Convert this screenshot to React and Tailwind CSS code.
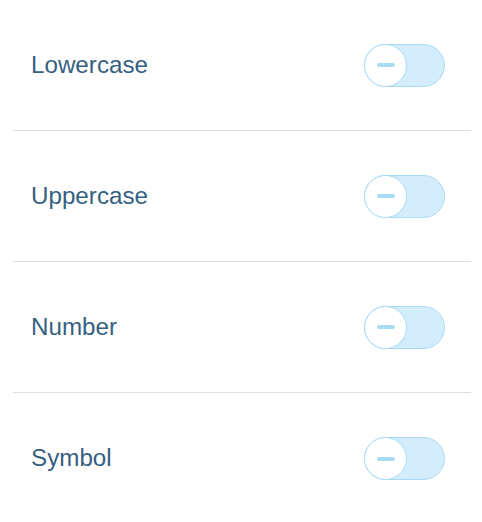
const OPTIONS = ["Lowercase", "Uppercase", "Number", "Symbol"];

function Toggle() {
  return (
    <div className="flex h-[43px] w-[81px] items-center rounded-full border border-[#a9dbf5] bg-[#d4edfc]">
      <div className="-ml-px flex h-[43px] w-[43px] items-center justify-center rounded-full border border-[#a9dbf5] bg-white">
        <div className="h-[4px] w-[18px] rounded-full bg-[#a9dbf5]" />
      </div>
    </div>
  );
}

export default function App() {
  return (
    <div className="h-[522px] w-[482px] bg-white font-['Liberation_Sans',Arial,sans-serif]">
      <div className="ml-[13px] mr-[11px]">
        {OPTIONS.map((label, i) => (
          <div
            key={label}
            className={`flex h-[131px] items-center justify-between pl-[18px] pr-[26px] ${
              i < OPTIONS.length - 1 ? "border-b border-[#d6e0e8]" : ""
            }`}
          >
            <span className="text-[24.2px] text-[#36607f]">{label}</span>
            <Toggle />
          </div>
        ))}
      </div>
    </div>
  );
}
